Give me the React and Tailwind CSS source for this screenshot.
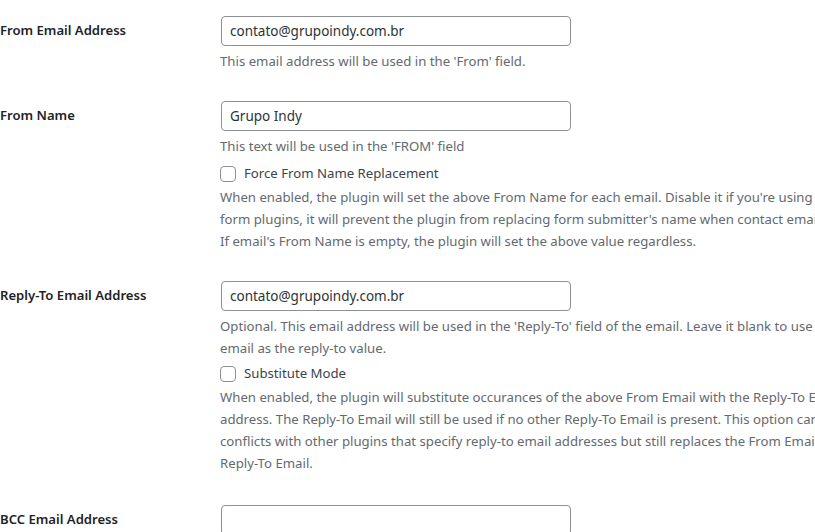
const font = { fontFamily: '"Segoe UI", "Noto Sans", sans-serif' };

const Description = ({ lines, className = "" }) => (
  <div className={`text-[13.2px] leading-[22px] text-[#646970] ${className}`}>
    {lines.map((line) => (
      <div key={line} className="whitespace-nowrap">
        {line}
      </div>
    ))}
  </div>
);

const TextInput = ({ value }) => (
  <input
    type="text"
    defaultValue={value}
    className="ml-px block w-[350px] h-[30px] px-2 border border-[#8c8f94] rounded-[4px] bg-white text-[13.5px] text-[#2c3338] outline-none"
  />
);

const Checkbox = ({ label, className = "" }) => (
  <label className={`flex items-center h-6 gap-2 text-[13.2px] text-[#3c434a] ${className}`}>
    <span className="w-4 h-4 border border-[#8c8f94] rounded-[4px] bg-white" />
    {label}
  </label>
);

const Row = ({ label, className = "", children }) => (
  <div className={`flex ${className}`}>
    <div className="w-[220px] shrink-0 h-[29px] flex items-center text-[13.1px] font-semibold text-[#1d2327]">
      {label}
    </div>
    <div>{children}</div>
  </div>
);

export default function App() {
  return (
    <div
      className="w-[815px] h-[532px] overflow-hidden bg-white"
      style={font}
    >
      <Row label="From Email Address" className="mt-4">
        <TextInput value="contato@grupoindy.com.br" />
        <Description
          className="mt-1"
          lines={["This email address will be used in the 'From' field."]}
        />
      </Row>

      <Row label="From Name" className="mt-[29px]">
        <TextInput value="Grupo Indy" />
        <Description
          className="mt-1"
          lines={["This text will be used in the 'FROM' field"]}
        />
        <Checkbox label="Force From Name Replacement" className="mt-[5px]" />
        <Description
          lines={[
            "When enabled, the plugin will set the above From Name for each email. Disable it if you're using contact",
            "form plugins, it will prevent the plugin from replacing form submitter's name when contact email is sent.",
            "If email's From Name is empty, the plugin will set the above value regardless.",
          ]}
        />
      </Row>

      <Row label="Reply-To Email Address" className="mt-[29px]">
        <TextInput value="contato@grupoindy.com.br" />
        <Description
          className="mt-1"
          lines={[
            "Optional. This email address will be used in the 'Reply-To' field of the email. Leave it blank to use the From",
            "email as the reply-to value.",
          ]}
        />
        <Checkbox label="Substitute Mode" className="mt-[3px]" />
        <Description
          lines={[
            "When enabled, the plugin will substitute occurances of the above From Email with the Reply-To Email",
            "address. The Reply-To Email will still be used if no other Reply-To Email is present. This option can prevent",
            "conflicts with other plugins that specify reply-to email addresses but still replaces the From Email with the",
            "Reply-To Email.",
          ]}
        />
      </Row>

      <Row label="BCC Email Address" className="mt-[31px]">
        <TextInput value="" />
      </Row>
    </div>
  );
}
